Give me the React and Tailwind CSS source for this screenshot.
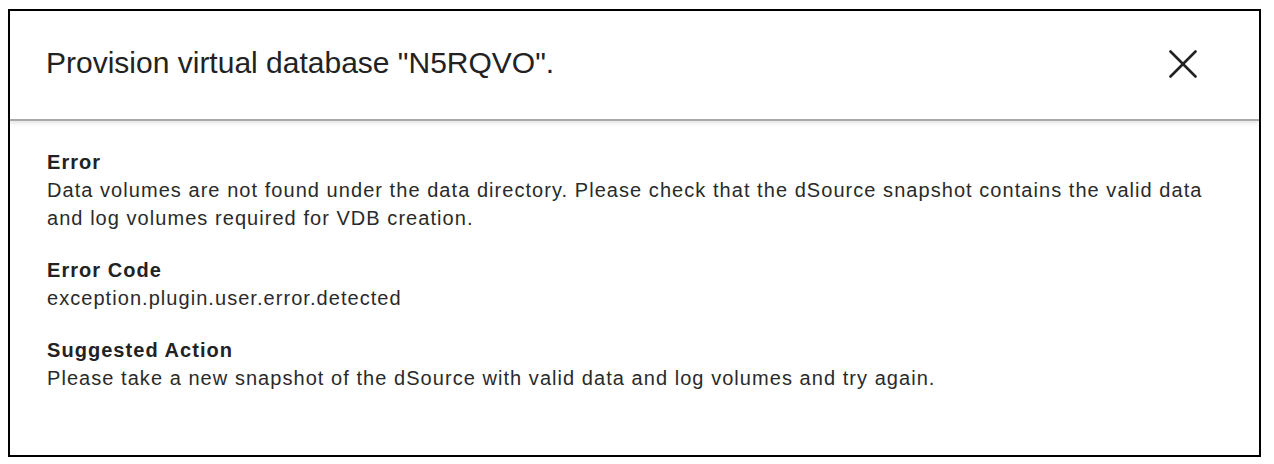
import React from "react";

function CloseIcon() {
  return (
    <svg width="28" height="28" viewBox="0 0 28 28" className="shrink-0">
      <line x1="1.5" y1="1.5" x2="26.5" y2="26.5" stroke="#222" strokeWidth="2.6" strokeLinecap="round" />
      <line x1="26.5" y1="1.5" x2="1.5" y2="26.5" stroke="#222" strokeWidth="2.6" strokeLinecap="round" />
    </svg>
  );
}

function Section({ label, children, className = "" }) {
  return (
    <div className={className}>
      <div className="font-bold text-[#222]">{label}</div>
      <div className="text-[#2a2a2a]">{children}</div>
    </div>
  );
}

export default function App() {
  return (
    <div className="w-[1274px] h-[464px] bg-white pt-[9px] pl-[8px] overflow-hidden" style={{ fontFamily: '"Liberation Sans", Arial, sans-serif' }}>
      <div className="w-[1253px] h-[448px] border-2 border-black bg-white flex flex-col">
        <div className="h-[110px] shrink-0 border-b-2 border-[#aaaaaa] shadow-[0_2px_4px_rgba(0,0,0,0.12)] flex justify-between items-start pl-[36px] pr-[62px] pt-[34px]">
          <h1 className="text-[30px] leading-[36px] text-[#222]">
            Provision virtual database "N5RQVO".
          </h1>
          <div className="mt-[5px]">
            <CloseIcon />
          </div>
        </div>
        <div className="pl-[37px] pr-[36px] pt-[27px] text-[20px] leading-[28px] tracking-[1.05px]">
          <Section label="Error">
            Data volumes are not found under the data directory. Please check that the dSource snapshot contains the valid data and log volumes required for VDB creation.
          </Section>
          <Section label="Error Code" className="mt-[24px]">
            exception.plugin.user.error.detected
          </Section>
          <Section label="Suggested Action" className="mt-[24px]">
            Please take a new snapshot of the dSource with valid data and log volumes and try again.
          </Section>
        </div>
      </div>
    </div>
  );
}
